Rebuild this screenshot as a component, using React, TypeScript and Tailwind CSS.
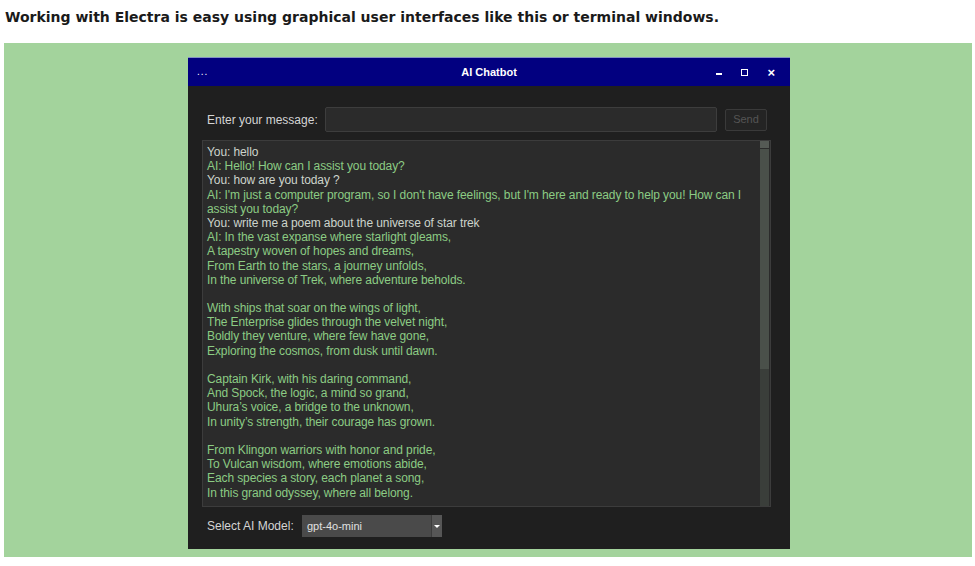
import React from 'react';

type Line = { text: string; who: 'you' | 'ai' | 'blank' };

const LINES: Line[] = [
  { text: 'You: hello', who: 'you' },
  { text: 'AI: Hello! How can I assist you today?', who: 'ai' },
  { text: 'You: how are you today ?', who: 'you' },
  { text: "AI: I'm just a computer program, so I don't have feelings, but I'm here and ready to help you! How can I", who: 'ai' },
  { text: 'assist you today?', who: 'ai' },
  { text: 'You: write me a poem about the universe of star trek', who: 'you' },
  { text: 'AI: In the vast expanse where starlight gleams,', who: 'ai' },
  { text: 'A tapestry woven of hopes and dreams,', who: 'ai' },
  { text: 'From Earth to the stars, a journey unfolds,', who: 'ai' },
  { text: 'In the universe of Trek, where adventure beholds.', who: 'ai' },
  { text: '', who: 'blank' },
  { text: 'With ships that soar on the wings of light,', who: 'ai' },
  { text: 'The Enterprise glides through the velvet night,', who: 'ai' },
  { text: 'Boldly they venture, where few have gone,', who: 'ai' },
  { text: 'Exploring the cosmos, from dusk until dawn.', who: 'ai' },
  { text: '', who: 'blank' },
  { text: 'Captain Kirk, with his daring command,', who: 'ai' },
  { text: 'And Spock, the logic, a mind so grand,', who: 'ai' },
  { text: 'Uhura\u2019s voice, a bridge to the unknown,', who: 'ai' },
  { text: 'In unity\u2019s strength, their courage has grown.', who: 'ai' },
  { text: '', who: 'blank' },
  { text: 'From Klingon warriors with honor and pride,', who: 'ai' },
  { text: 'To Vulcan wisdom, where emotions abide,', who: 'ai' },
  { text: 'Each species a story, each planet a song,', who: 'ai' },
  { text: 'In this grand odyssey, where all belong.', who: 'ai' },
];

function TitleBar() {
  return (
    <div className="h-[29px] bg-[#020080] border-t border-[#8391c4] flex items-center px-[9px] text-white">
      <span className="text-[10px] leading-none tracking-[1px] w-[90px]">...</span>
      <span className="flex-1 text-center text-[11px] font-bold">AI Chatbot</span>
      <div className="w-[90px] flex items-center justify-end gap-[19px] pr-[6px]">
        <span className="block w-[6px] h-[1.5px] bg-white mt-[4px]" />
        <span className="block w-[7px] h-[7px] border border-white" />
        <span className="text-[13px] font-bold leading-none">×</span>
      </div>
    </div>
  );
}

function ChatLog() {
  return (
    <div className="mt-[8px] ml-[14px] w-[569px] h-[367px] bg-[#2b2b2b] border border-[#3c3c3c] flex">
      <div className="flex-1 pl-[4px] pt-[4px] text-[12px] leading-[14.2px] tracking-[-0.1px]">
        {LINES.map((l, i) => (
          <div
            key={i}
            className={
              l.who === 'you'
                ? 'h-[14.2px] whitespace-nowrap text-[#cdd4cb]'
                : 'h-[14.2px] whitespace-nowrap text-[#8ccc84]'
            }
          >
            {l.text}
          </div>
        ))}
      </div>
      <div className="w-[9px] mr-[1px] flex flex-col bg-[#3a3e3a]">
        <div className="h-[8px] bg-[#555a55] border-b border-[#2b2b2b]" />
        <div className="h-[220px] bg-[#4a504a]" />
      </div>
    </div>
  );
}

export default function App() {
  return (
    <div className="w-[975px] h-[566px] bg-white" style={{ fontFamily: 'Verdana, "DejaVu Sans", sans-serif' }}>
      <h1 className="pl-[5px] pt-[7px] h-[43px] text-[14px] font-bold text-[#1a1a1a]">
        Working with Electra is easy using graphical user interfaces like this or terminal windows.
      </h1>
      <div className="ml-[4px] w-[968px] h-[514px] bg-[#a3d39c] pl-[184px] pt-[14px]">
        <div
          className="w-[602px] h-[492px] bg-[#1f1f1f] flex flex-col"
          style={{ fontFamily: '"Liberation Sans", Arial, sans-serif' }}
        >
          <TitleBar />
          <div className="flex items-center mt-[21px] h-[25px]">
            <span className="ml-[19px] w-[118px] text-[12px] text-[#d4d4d4]">Enter your message:</span>
            <div className="w-[392px] h-[25px] bg-[#2b2b2b] border border-[#3d3d3d] rounded-[2px]" />
            <button className="ml-[8px] w-[42px] h-[22px] border border-[#3a3a3a] rounded-[2px] bg-[#242424] text-[11px] text-[#555555]">
              Send
            </button>
          </div>
          <ChatLog />
          <div className="flex items-center mt-[8px] h-[22px]">
            <span className="ml-[19px] w-[95px] text-[12px] text-[#d4d4d4]">Select AI Model:</span>
            <div className="w-[140px] h-[22px] bg-[#4a4a4a] flex items-center">
              <span className="flex-1 pl-[5px] text-[11px] text-[#e0e0e0]">gpt-4o-mini</span>
              <div className="w-[11px] h-full bg-[#565656] flex items-center justify-center border-l border-[#3c3c3c]">
                <span className="block w-0 h-0 border-l-[3px] border-r-[3px] border-t-[3px] border-l-transparent border-r-transparent border-t-white" />
              </div>
            </div>
          </div>
        </div>
      </div>
    </div>
  );
}
